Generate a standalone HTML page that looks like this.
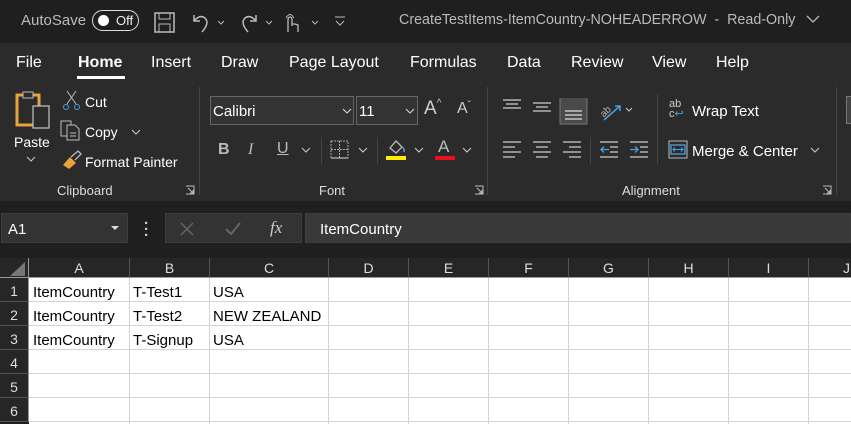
<!DOCTYPE html>
<html><head><meta charset="utf-8"><style>
*{margin:0;padding:0;box-sizing:border-box}
body{width:851px;height:424px;overflow:hidden;background:#1f1f1f;font-family:"Segoe UI","Liberation Sans",sans-serif;color:#fff;position:relative}
.a{position:absolute;white-space:nowrap}
.t{font-size:15px;color:#fff;margin-top:2px}
.s{font-size:14px;color:#fff;margin-top:2px}
.g{color:#ccc}
svg{position:absolute}
.hd{position:absolute;top:258px;height:20px;background:#262626;border-right:1px solid #555;border-bottom:1px solid #9a9a9a;color:#ddd;font-size:14px;text-align:center;line-height:21px}
.rh{position:absolute;left:0;width:29px;background:#262626;border-right:1px solid #9a9a9a;border-bottom:1px solid #555;color:#ddd;font-size:14px;text-align:center;line-height:26px;height:24px}
.grid{position:absolute;left:29px;top:278px;right:0;bottom:0;background:#fff}
.c{position:absolute;color:#000;font-size:15px;font-family:"Liberation Sans",sans-serif;line-height:24px;margin-top:2px}
</style></head><body>
<!-- title bar -->
<div class="a" style="left:0;top:0;width:851px;height:43px;background:#1f1f1f"></div>
<div class="a s" style="left:21px;top:10px;color:#bbb;font-size:15px">AutoSave</div>
<div class="a" style="left:92px;top:10px;width:47px;height:21px;border:1.5px solid #ddd;border-radius:11px"></div>
<div class="a" style="left:98px;top:15px;width:11px;height:11px;border-radius:6px;background:#fff"></div>
<div class="a" style="left:116px;top:13px;font-size:13px;color:#eee">Off</div>
<svg style="left:154px;top:12px" width="22" height="22"><rect x="1" y="1" width="19" height="19" fill="none" stroke="#bbb" stroke-width="1.5"/><rect x="5" y="1" width="11" height="6" fill="none" stroke="#bbb"/><rect x="5" y="12" width="11" height="8" fill="none" stroke="#bbb"/></svg>
<svg style="left:190px;top:12px" width="50" height="22"><path d="M4 3 L4 9 L10 9 M4 9 Q10 2 15 6 Q20 11 12 20" fill="none" stroke="#bbb" stroke-width="1.5"/><path d="M28 9l3 3 3-3" fill="none" stroke="#bbb"/></svg>
<svg style="left:238px;top:12px" width="50" height="22"><path d="M18 3 L18 9 L12 9 M18 9 Q12 2 7 6 Q2 11 10 20" fill="none" stroke="#bbb" stroke-width="1.5"/><path d="M28 9l3 3 3-3" fill="none" stroke="#bbb"/></svg>
<svg style="left:283px;top:12px" width="40" height="24"><path d="M5 20 L5 8 Q5 5 7 5 Q9 5 9 8 L9 14 M9 12 L12 12 L15 13 L15 20" fill="none" stroke="#bbb" stroke-width="1.3"/><path d="M3 6 Q7 -1 11 6" fill="none" stroke="#bbb"/><path d="M29 9l3 3 3-3" fill="none" stroke="#bbb"/></svg>
<svg style="left:333px;top:14px" width="14" height="14"><path d="M2 3h10M3 7l4 4 4-4" fill="none" stroke="#bbb"/></svg>
<div class="a" style="left:399px;top:12px;font-size:14.3px;color:#bbb">CreateTestItems-ItemCountry-NOHEADERROW &nbsp;- &nbsp;Read-Only</div>
<svg style="left:806px;top:14px" width="14" height="10"><path d="M1 2l6 6 6-6" fill="none" stroke="#bbb" stroke-width="1.3"/></svg>
<!-- ribbon -->
<div class="a" style="left:0;top:43px;width:851px;height:158px;background:#2b2b2b"></div>
<div class="a t" style="left:16px;top:52px;font-size:16px">File</div>
<div class="a t" style="left:78px;top:52px;font-size:16px;font-weight:bold">Home</div>
<div class="a" style="left:77px;top:76px;width:48px;height:3px;background:#fff"></div>
<div class="a t" style="left:151px;top:52px;font-size:16px">Insert</div>
<div class="a t" style="left:221px;top:52px;font-size:16px">Draw</div>
<div class="a t" style="left:289px;top:52px;font-size:16px">Page Layout</div>
<div class="a t" style="left:410px;top:52px;font-size:16px">Formulas</div>
<div class="a t" style="left:507px;top:52px;font-size:16px">Data</div>
<div class="a t" style="left:571px;top:52px;font-size:16px">Review</div>
<div class="a t" style="left:652px;top:52px;font-size:16px">View</div>
<div class="a t" style="left:716px;top:52px;font-size:16px">Help</div>
<!-- clipboard -->
<svg style="left:14px;top:89px" width="40" height="42"><rect x="3" y="6" width="22" height="30" fill="none" stroke="#e8a33a" stroke-width="3"/><rect x="9" y="3" width="10" height="6" fill="#2b2b2b" stroke="#bbb"/><rect x="19" y="17" width="16" height="22" fill="#2b2b2b" stroke="#bbb" stroke-width="1.3"/></svg>
<div class="a s" style="left:14px;top:132px">Paste</div>
<svg style="left:26px;top:155px" width="10" height="8"><path d="M1 2l4 4 4-4" fill="none" stroke="#ccc"/></svg>
<svg style="left:62px;top:89px" width="20" height="22"><path d="M5 2 L14 15 M14 2 L5 15" stroke="#bbb" fill="none"/><circle cx="4" cy="18" r="2.5" fill="none" stroke="#4aa0e0"/><circle cx="15" cy="18" r="2.5" fill="none" stroke="#4aa0e0"/></svg>
<div class="a s" style="left:85px;top:92px">Cut</div>
<svg style="left:60px;top:119px" width="22" height="22"><rect x="1" y="2" width="10" height="15" fill="none" stroke="#bbb"/><path d="M7 6h8l4 4v11H7z" fill="#2b2b2b" stroke="#bbb"/><path d="M10 14h6M10 17h6" stroke="#bbb"/></svg>
<div class="a s" style="left:85px;top:122px">Copy</div>
<svg style="left:131px;top:128px" width="10" height="8"><path d="M1 2l4 4 4-4" fill="none" stroke="#ccc"/></svg>
<svg style="left:61px;top:150px" width="22" height="20"><path d="M2 15 L9 7 L15 13 L8 19 Z" fill="#e8a33a"/><path d="M10 7 L17 1 L20 4 L14 10" fill="none" stroke="#bbb" stroke-width="1.3"/></svg>
<div class="a s" style="left:85px;top:152px">Format Painter</div>
<div class="a" style="left:57px;top:183px;font-size:13px;color:#ddd">Clipboard</div>
<svg style="left:185px;top:185px" width="10" height="10"><path d="M1 1h8v8H1M3 3l5 5M5 8h3V5" fill="none" stroke="#bbb"/></svg>
<div class="a" style="left:199px;top:87px;width:1px;height:108px;background:#444"></div>
<!-- font -->
<div class="a" style="left:210px;top:96px;width:144px;height:29px;border:1px solid #666;background:#333"></div>
<div class="a s" style="left:213px;top:101px;font-family:'Liberation Sans',sans-serif;font-size:15px">Calibri</div>
<svg style="left:342px;top:107px" width="10" height="8"><path d="M1 2l4 4 4-4" fill="none" stroke="#ddd"/></svg>
<div class="a" style="left:356px;top:96px;width:62px;height:29px;border:1px solid #666;background:#333"></div>
<div class="a s" style="left:359px;top:101px;font-size:15px">11</div>
<svg style="left:405px;top:107px" width="10" height="8"><path d="M1 2l4 4 4-4" fill="none" stroke="#ddd"/></svg>
<div class="a" style="left:424px;top:98px;font-size:19px;color:#ccc">A<span style="font-size:10px;vertical-align:top">^</span></div>
<div class="a" style="left:457px;top:100px;font-size:16px;color:#ccc">A<span style="font-size:10px;vertical-align:top">ˇ</span></div>
<div class="a" style="left:218px;top:141px;font-size:16px;font-weight:bold;color:#bbb">B</div>
<div class="a" style="left:248px;top:141px;font-size:16px;font-style:italic;color:#bbb;font-family:'Liberation Serif',serif">I</div>
<div class="a" style="left:277px;top:140px;font-size:16px;color:#bbb;text-decoration:underline">U</div>
<svg style="left:301px;top:146px" width="10" height="8"><path d="M1 2l4 4 4-4" fill="none" stroke="#ccc"/></svg>
<div class="a" style="left:321px;top:137px;width:1px;height:27px;background:#444"></div>
<svg style="left:330px;top:140px" width="20" height="20"><rect x="1" y="1" width="17" height="17" fill="none" stroke="#aaa" stroke-dasharray="2 1"/><path d="M9.5 1v17M1 9.5h17" stroke="#aaa" stroke-dasharray="2 1"/><path d="M1 18h17" stroke="#ddd"/></svg>
<svg style="left:358px;top:146px" width="10" height="8"><path d="M1 2l4 4 4-4" fill="none" stroke="#ccc"/></svg>
<div class="a" style="left:377px;top:137px;width:1px;height:27px;background:#444"></div>
<svg style="left:385px;top:138px" width="22" height="22"><path d="M5 10 L11 3 L17 9 L11 15 Z" fill="none" stroke="#bbb" stroke-width="1.3"/><path d="M17 9 Q20 11 19 14" stroke="#4aa0e0" fill="none" stroke-width="1.5"/><rect x="1" y="18" width="20" height="4" fill="#ffea00"/></svg>
<svg style="left:414px;top:146px" width="10" height="8"><path d="M1 2l4 4 4-4" fill="none" stroke="#ccc"/></svg>
<div class="a" style="left:438px;top:137px;font-size:17px;color:#bbb">A</div>
<div class="a" style="left:435px;top:156px;width:20px;height:4px;background:#e81123"></div>
<svg style="left:462px;top:146px" width="10" height="8"><path d="M1 2l4 4 4-4" fill="none" stroke="#ccc"/></svg>
<div class="a" style="left:319px;top:183px;font-size:13px;color:#ddd">Font</div>
<svg style="left:474px;top:185px" width="10" height="10"><path d="M1 1h8v8H1M3 3l5 5M5 8h3V5" fill="none" stroke="#bbb"/></svg>
<div class="a" style="left:487px;top:87px;width:1px;height:108px;background:#444"></div>
<!-- alignment -->
<svg style="left:502px;top:98px" width="130" height="28"><g stroke="#ccc" stroke-width="1.3"><path d="M1 2h18M4 6h12M1 10h18"/><path d="M31 5h18M34 9h12M31 13h18"/></g><rect x="58" y="-1" width="27" height="27" fill="#4a4a4a" stroke="#777"/><g stroke="#ddd" stroke-width="1.3"><path d="M63 13h17M63 17h17M63 21h17"/></g><text x="97" y="16" font-size="10" fill="#bbb" transform="rotate(-45 104 12)">ab</text><path d="M102 22 L118 8 M113 8h5v5" stroke="#4aa0e0" fill="none" stroke-width="1.5"/><path d="M124 10l3 3 3-3" fill="none" stroke="#ccc"/></svg>
<svg style="left:502px;top:140px" width="168" height="20"><g stroke="#ccc" stroke-width="1.3"><path d="M1 2h18M1 7h12M1 12h18M1 17h12"/><path d="M31 2h18M34 7h12M31 12h18M34 17h12"/><path d="M61 2h18M67 7h12M61 12h18M67 17h12"/><path d="M98 2h18M108 7h8M108 12h8M98 17h18"/><path d="M128 2h18M138 7h8M138 12h8M128 17h18"/></g><path d="M107 9.5h-8m3-3-3 3 3 3" stroke="#4aa0e0" fill="none" stroke-width="1.3"/><path d="M128 9.5h8m-3-3 3 3-3 3" stroke="#4aa0e0" fill="none" stroke-width="1.3"/></svg>
<div class="a" style="left:590px;top:137px;width:1px;height:27px;background:#444"></div>
<div class="a" style="left:657px;top:94px;width:1px;height:70px;background:#444"></div>
<div class="a" style="left:669px;top:99px;font-size:11px;color:#ccc;line-height:10px">ab<br>c<span style="color:#4aa0e0">↩</span></div>
<div class="a s" style="left:692px;top:101px;font-size:15px">Wrap Text</div>
<svg style="left:668px;top:140px" width="20" height="19"><rect x="1" y="1" width="18" height="17" fill="none" stroke="#bbb"/><rect x="3" y="5" width="14" height="9" fill="none" stroke="#4aa0e0" stroke-width="1.3"/><path d="M5 9.5h10M7 7.5l-2 2 2 2M13 7.5l2 2-2 2" stroke="#4aa0e0" fill="none"/></svg>
<div class="a s" style="left:692px;top:141px;font-size:15px">Merge &amp; Center</div>
<svg style="left:810px;top:146px" width="10" height="8"><path d="M1 2l4 4 4-4" fill="none" stroke="#ccc"/></svg>
<div class="a" style="left:622px;top:183px;font-size:13px;color:#ddd">Alignment</div>
<svg style="left:822px;top:185px" width="10" height="10"><path d="M1 1h8v8H1M3 3l5 5M5 8h3V5" fill="none" stroke="#bbb"/></svg>
<div class="a" style="left:836px;top:87px;width:1px;height:108px;background:#444"></div>
<div class="a" style="left:846px;top:96px;width:6px;height:28px;border:1px solid #777;background:#444"></div>
<!-- formula bar -->
<div class="a" style="left:0;top:201px;width:851px;height:57px;background:#1f1f1f"></div>
<div class="a" style="left:1px;top:213px;width:127px;height:30px;background:#333;border:1px solid #3d3d3d"></div>
<div class="a s" style="left:8px;top:219px;font-size:15px">A1</div>
<svg style="left:110px;top:225px" width="10" height="6"><path d="M1 1h8l-4 4z" fill="#ddd"/></svg>
<div class="a" style="left:144px;top:221px;font-size:15px;font-weight:bold;color:#ccc;line-height:6px">·<br>·<br>·</div>
<div class="a" style="left:165px;top:213px;width:137px;height:30px;background:#333;border:1px solid #3d3d3d"></div>
<svg style="left:179px;top:221px" width="16" height="16"><path d="M2 2l12 12M14 2L2 14" stroke="#666" stroke-width="1.5"/></svg>
<svg style="left:224px;top:221px" width="18" height="16"><path d="M2 8l5 5 9-11" stroke="#666" stroke-width="2" fill="none"/></svg>
<div class="a" style="left:270px;top:218px;font-size:17px;font-style:italic;font-family:'Liberation Serif',serif;color:#ccc">fx</div>
<div class="a" style="left:305px;top:213px;width:546px;height:30px;background:#393939;border:1px solid #3d3d3d"></div>
<div class="a s" style="left:320px;top:219px;font-size:15px">ItemCountry</div>
<!-- headers -->
<div class="hd" style="left:0;width:29px;border-bottom:1px solid #9a9a9a;border-right:1px solid #9a9a9a"></div>
<svg style="left:8px;top:262px" width="18" height="14"><path d="M17 0V14H2z" fill="#777"/></svg>
<div class="hd" style="left:29px;width:101px">A</div>
<div class="hd" style="left:130px;width:80px">B</div>
<div class="hd" style="left:210px;width:119px">C</div>
<div class="hd" style="left:329px;width:80px">D</div>
<div class="hd" style="left:409px;width:80px">E</div>
<div class="hd" style="left:489px;width:80px">F</div>
<div class="hd" style="left:569px;width:80px">G</div>
<div class="hd" style="left:649px;width:80px">H</div>
<div class="hd" style="left:729px;width:80px">I</div>
<div class="hd" style="left:809px;width:80px;text-align:left;padding-left:34px">J</div>
<div class="rh" style="top:278px">1</div>
<div class="rh" style="top:302px">2</div>
<div class="rh" style="top:326px">3</div>
<div class="rh" style="top:350px">4</div>
<div class="rh" style="top:374px">5</div>
<div class="rh" style="top:398px">6</div>
<div class="grid" style="background-color:#fff;background-image:linear-gradient(#d4d4d4 1px,transparent 1px);background-size:100% 24px;background-position:0 23px"></div>
<div class="a" style="left:129px;top:278px;width:1px;height:146px;background:#d4d4d4"></div>
<div class="a" style="left:209px;top:278px;width:1px;height:146px;background:#d4d4d4"></div>
<div class="a" style="left:328px;top:278px;width:1px;height:146px;background:#d4d4d4"></div>
<div class="a" style="left:408px;top:278px;width:1px;height:146px;background:#d4d4d4"></div>
<div class="a" style="left:488px;top:278px;width:1px;height:146px;background:#d4d4d4"></div>
<div class="a" style="left:568px;top:278px;width:1px;height:146px;background:#d4d4d4"></div>
<div class="a" style="left:648px;top:278px;width:1px;height:146px;background:#d4d4d4"></div>
<div class="a" style="left:728px;top:278px;width:1px;height:146px;background:#d4d4d4"></div>
<div class="a" style="left:808px;top:278px;width:1px;height:146px;background:#d4d4d4"></div>
<div class="c" style="left:33px;top:279px">ItemCountry</div>
<div class="c" style="left:133px;top:279px">T-Test1</div>
<div class="c" style="left:213px;top:279px">USA</div>
<div class="c" style="left:33px;top:303px">ItemCountry</div>
<div class="c" style="left:133px;top:303px">T-Test2</div>
<div class="c" style="left:213px;top:303px">NEW ZEALAND</div>
<div class="c" style="left:33px;top:327px">ItemCountry</div>
<div class="c" style="left:133px;top:327px">T-Signup</div>
<div class="c" style="left:213px;top:327px">USA</div>
</body></html>
